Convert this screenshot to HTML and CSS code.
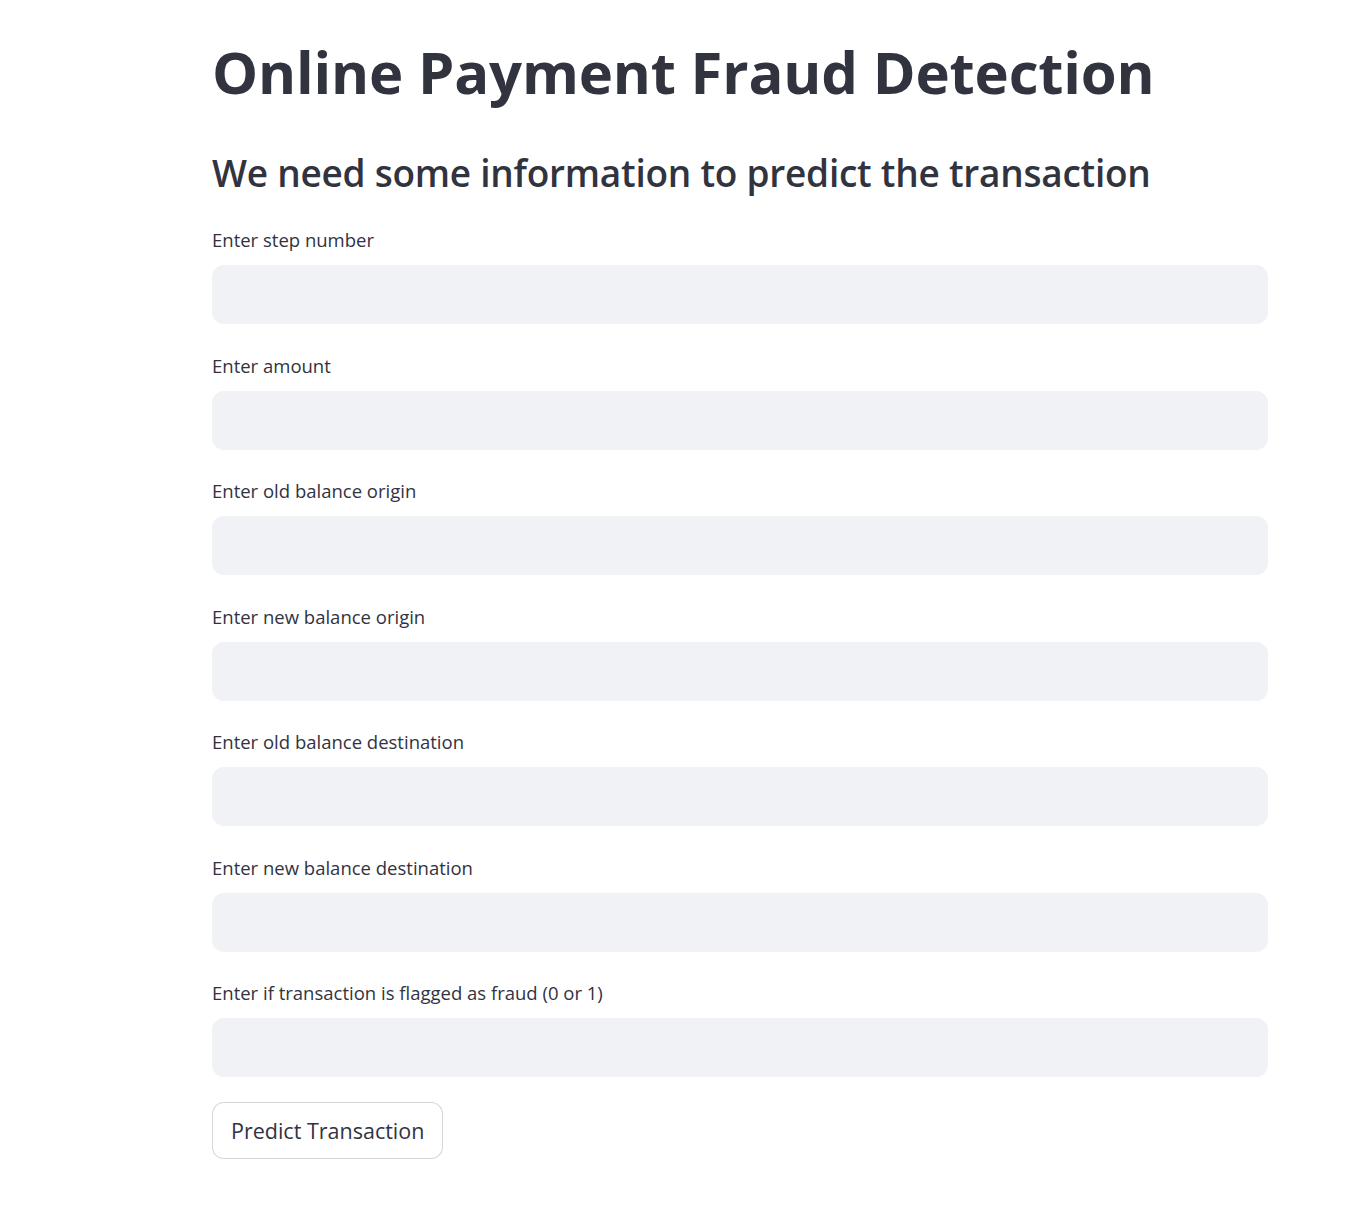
FILE: index.html
```html
<!DOCTYPE html>
<html lang="en">
<head>
<meta charset="utf-8">
<title>Online Payment Fraud Detection</title>
<link rel="stylesheet" href="styles.css">
</head>
<body>
<main class="main">
  <h1 class="title">Online Payment Fraud Detection</h1>
  <h3 class="subtitle">We need some information to predict the transaction</h3>
  <form class="form">
    <div class="field">
      <label class="label">Enter step number</label>
      <input class="input" type="text">
    </div>
    <div class="field">
      <label class="label">Enter amount</label>
      <input class="input" type="text">
    </div>
    <div class="field">
      <label class="label">Enter old balance origin</label>
      <input class="input" type="text">
    </div>
    <div class="field">
      <label class="label">Enter new balance origin</label>
      <input class="input" type="text">
    </div>
    <div class="field">
      <label class="label">Enter old balance destination</label>
      <input class="input" type="text">
    </div>
    <div class="field">
      <label class="label">Enter new balance destination</label>
      <input class="input" type="text">
    </div>
    <div class="field">
      <label class="label">Enter if transaction is flagged as fraud (0 or 1)</label>
      <input class="input" type="text">
    </div>
    <div class="actions">
      <button class="button" type="button">Predict Transaction</button>
    </div>
  </form>
</main>
</body>
</html>
```

FILE: styles.css
```css
html, body {
  margin: 0;
  padding: 0;
  background: #ffffff;
}
body {
  font-family: "Open Sans", "Noto Sans", sans-serif;
  color: #31333f;
}
.main {
  width: 1056px;
  padding: 0 0 0 212px;
  display: flex;
  flex-direction: column;
}
.title {
  margin: 0;
  padding-top: 37px;
  font-size: 58px;
  font-weight: 700;
  line-height: 70px;
  letter-spacing: -0.17px;
}
.subtitle {
  margin: 0;
  padding-top: 42px;
  font-size: 37px;
  font-weight: 600;
  line-height: 48px;
  letter-spacing: -0.25px;
}
.form {
  display: flex;
  flex-direction: column;
  padding-top: 29px;
}
.field {
  display: flex;
  flex-direction: column;
  height: 125.5px;
}
.label {
  font-size: 18.5px;
  line-height: 28px;
  height: 28px;
}
.input {
  box-sizing: border-box;
  margin-top: 11px;
  height: 59px;
  width: 100%;
  border: none;
  border-radius: 12px;
  background: #f0f2f6;
  outline: none;
  font: inherit;
}
.actions {
  display: flex;
}
.button {
  margin-top: -2.5px;
  box-sizing: border-box;
  height: 57px;
  padding: 0 18px;
  border: 1px solid rgba(49, 51, 63, 0.2);
  border-radius: 12px;
  background: #ffffff;
  color: #31333f;
  font-family: "Open Sans", "Noto Sans", sans-serif;
  font-size: 21.5px;
}
```
